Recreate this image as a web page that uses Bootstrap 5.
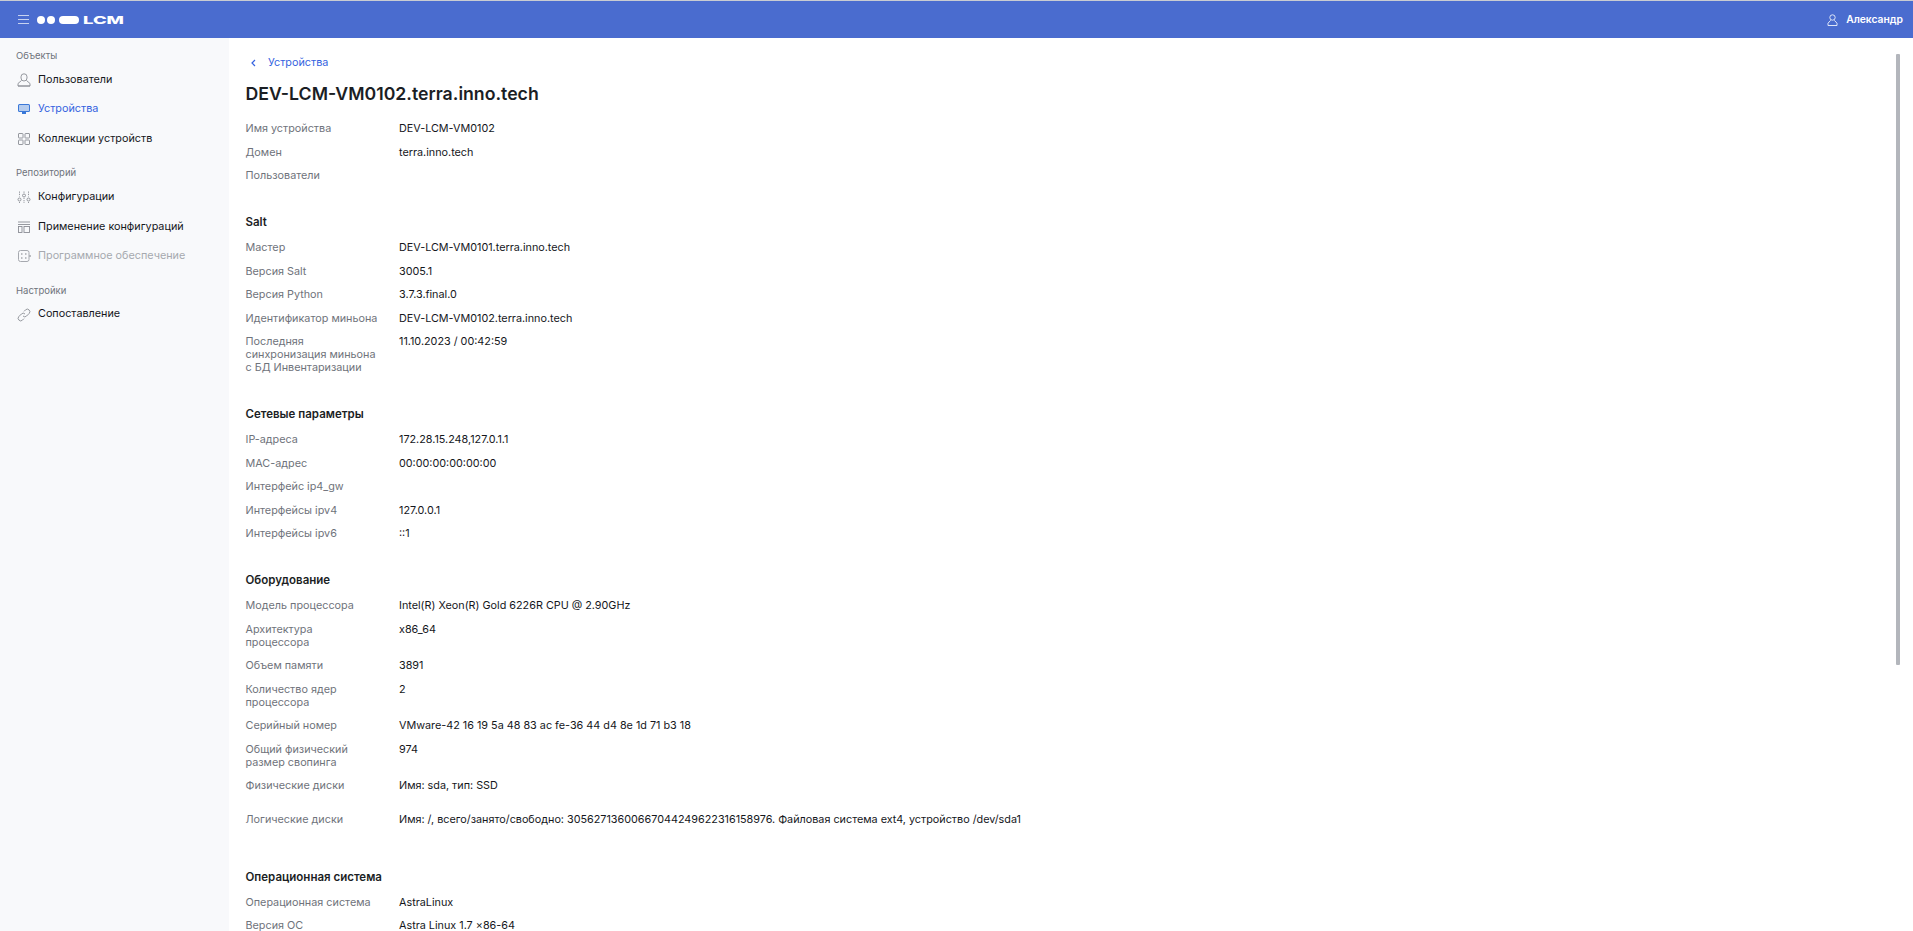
<!DOCTYPE html>
<html lang="ru"><head><meta charset="utf-8"><title>LCM</title>
<link href="https://cdn.jsdelivr.net/npm/bootstrap@5.3.0/dist/css/bootstrap.min.css" rel="stylesheet">
<style>
html,body{height:100%;overflow:hidden}
body{font-family:Inter,"Liberation Sans",sans-serif;font-size:10.8px;color:#15171c;background:#fff}
.topbar{height:38px;background:#4a6ccf;border-top:1px solid #c9ccd2;padding:0 10px 0 18px;flex:none}
.burger{width:11px;height:11px;display:block}
.brand-logo{margin-left:8px;display:block}
.user-name{font-weight:600;font-size:10.3px;color:#fff}
.shell{flex:1;min-height:0}
.sidebar{width:229px;background:#f8f9fb;padding-top:11px;flex:none}
.side-head{font-size:9.5px;line-height:14px;color:#6f737b;padding-left:16px;margin-bottom:2px}
.side-group{margin-bottom:12.6px}
.side-item{height:29.6px;padding-left:17px;gap:7px;color:#15171c;font-size:10.8px;text-decoration:none}
.side-item svg{width:14px;height:14px;flex:none;color:#8a8d94}
.side-item.is-on{color:#3563e0}
.side-item.is-on svg{color:#3a78d8}
.side-item.is-off{color:#a6a9af}
.side-item.is-off svg{color:#a6a9af}
.content{flex:1;min-width:0;padding:17px 0 0 16.5px;overflow:hidden;position:relative}
.crumb{color:#3563e0;text-decoration:none;font-size:10.8px;line-height:16px;gap:12px;padding-left:5.5px}
.page-title{font-size:17.7px;font-weight:600;line-height:24px;margin:10.3px 0 15.7px;color:#1b1e24}
.sect{margin-bottom:32.7px}
.sect-title{font-size:11.5px;font-weight:600;line-height:15px;margin:0 0 11px;color:#1b1e24}
.kv{margin-bottom:10.58px;line-height:13px}
.kv-key{width:153.5px;padding-right:20.5px;color:#6f737b;flex:none}
.kv-wide{margin-bottom:21px}
.kv-end{margin-bottom:43.3px}
.thumb{position:absolute;right:13px;top:16px;width:4px;height:611px;background:#b3b6bc;border-radius:1px}
</style></head>
<body class="d-flex flex-column">
<header class="topbar d-flex align-items-center justify-content-between">
  <div class="d-flex align-items-center">
    <svg class="burger" viewBox="0 0 11 11" fill="none" stroke="#c7d2f0" stroke-width="1"><path d="M0 1.5h11M0 5.5h11M0 9.5h11"/></svg>
    <svg class="brand-logo" width="90" height="12" viewBox="0 0 90 12"><circle cx="4" cy="6" r="4" fill="#fff"/><circle cx="14" cy="6" r="4" fill="#fff"/><rect x="22" y="2" width="20" height="8" rx="4" fill="#fff"/><text x="46" y="10" fill="#fff" font-family="Inter" font-weight="800" font-size="11" textLength="41" lengthAdjust="spacingAndGlyphs">LCM</text></svg>
  </div>
  <div class="d-flex align-items-center gap-2">
    <svg width="11" height="12" viewBox="0 0 11 12" fill="none" stroke="#dfe6f8" stroke-width="1"><circle cx="5.5" cy="3.5" r="2.7"/><path d="M3.7 6.3 1 9.2v2.3h9V9.2L7.3 6.3"/></svg>
    <span class="user-name">Александр</span>
  </div>
</header>
<div class="shell d-flex">
  <nav class="sidebar">
    <div class="side-group">
      <div class="side-head">Объекты</div>
      <a class="side-item d-flex align-items-center" href="#"><svg viewBox="0 0 14 14" fill="none" stroke="currentColor" stroke-width=".9"><rect x="4" y=".8" width="6" height="7.200" rx="3"/><path d="M4.500 7.500 1 10.500V13h12v-2.500L9.500 7.500"/><path d="M1 13h12"/></svg>Пользователи</a>
      <a class="side-item is-on d-flex align-items-center" href="#"><svg viewBox="0 0 14 14" fill="currentColor"><path d="M2.500 2h9A1.500 1.500 0 0 1 13 3.500v5A1.500 1.500 0 0 1 11.500 10h-9A1.500 1.500 0 0 1 1 8.500v-5A1.500 1.500 0 0 1 2.500 2zm0 1a.5.5 0 0 0-.5.5v5a.5.5 0 0 0 .5.5h9a.5.5 0 0 0 .5-.5v-5a.5.5 0 0 0-.5-.5z"/><path d="M2 3h10v6H2z" opacity=".35"/><path d="M5 10h4v2H5z"/></svg>Устройства</a>
      <a class="side-item d-flex align-items-center" href="#"><svg viewBox="0 0 14 14" fill="none" stroke="currentColor" stroke-width=".9"><rect x="1.500" y="1.500" width="4.500" height="4.500" rx=".5"/><rect x="8" y="1.500" width="4.500" height="4.500" rx=".5"/><rect x="1.500" y="8" width="4.500" height="4.500" rx=".5"/><rect x="8" y="8" width="4.500" height="4.500" rx=".5"/></svg>Коллекции устройств</a>
    </div>
    <div class="side-group">
      <div class="side-head">Репозиторий</div>
      <a class="side-item d-flex align-items-center" href="#"><svg viewBox="0 0 14 14" fill="none" stroke="currentColor" stroke-width=".9"><path d="M2.500 1.500v5M7 1.500v2M11.500 1.500v5M7 8v1" stroke-dasharray="1.300 .9"/><circle cx="2.500" cy="9.500" r="1.500"/><circle cx="7" cy="5.500" r="1.500"/><circle cx="11.500" cy="9.500" r="1.500"/><path d="M7 10v3M2.500 12v1M11.500 12v1" stroke-dasharray="1.300 .9"/></svg>Конфигурации</a>
      <a class="side-item d-flex align-items-center" href="#"><svg viewBox="0 0 14 14" fill="none" stroke="currentColor" stroke-width=".9"><path d="M1 2h12M1 4.500h12"/><rect x="1.500" y="6.500" width="3.500" height="6"/><rect x="7" y="6.500" width="5.500" height="6"/></svg>Применение конфигураций</a>
      <a class="side-item is-off d-flex align-items-center" href="#"><svg viewBox="0 0 14 14" fill="none" stroke="currentColor"><rect x="1.500" y="1.500" width="10.500" height="11" rx="2"/><path d="M4 5h1.500M8 5h1.500M4 9h1.500M8 9h1.500M12 7h2" stroke-width="1.300"/></svg>Программное обеспечение</a>
    </div>
    <div class="side-group">
      <div class="side-head">Настройки</div>
      <a class="side-item d-flex align-items-center" href="#"><svg viewBox="0 0 14 14" fill="none" stroke="currentColor" stroke-width=".9"><path d="M6 8a2.500 2.500 0 0 0 3.600 0l2.500-2.500a2.500 2.500 0 0 0-3.600-3.600L7 3.400"/><path d="M8 6a2.500 2.500 0 0 0-3.600 0L1.900 8.500a2.500 2.500 0 0 0 3.600 3.600L7 10.600"/></svg>Сопоставление</a>
    </div>
  </nav>
  <main class="content">
    <a class="crumb d-inline-flex align-items-center" href="#"><svg width="5" height="8" viewBox="0 0 5 8" fill="none" stroke="#3563e0" stroke-width="1.200"><path d="M4 1 1 4l3 3"/></svg>Устройства</a>
    <h1 class="page-title">DEV-LCM-VM0102.terra.inno.tech</h1>
    <section class="sect">
      <div class="kv d-flex"><div class="kv-key">Имя устройства</div><div>DEV-LCM-VM0102</div></div>
      <div class="kv d-flex"><div class="kv-key">Домен</div><div>terra.inno.tech</div></div>
      <div class="kv d-flex"><div class="kv-key">Пользователи</div><div></div></div>
    </section>
    <section class="sect">
      <h2 class="sect-title">Salt</h2>
      <div class="kv d-flex"><div class="kv-key">Мастер</div><div>DEV-LCM-VM0101.terra.inno.tech</div></div>
      <div class="kv d-flex"><div class="kv-key">Версия Salt</div><div>3005.1</div></div>
      <div class="kv d-flex"><div class="kv-key">Версия Python</div><div>3.7.3.final.0</div></div>
      <div class="kv d-flex"><div class="kv-key">Идентификатор миньона</div><div>DEV-LCM-VM0102.terra.inno.tech</div></div>
      <div class="kv d-flex"><div class="kv-key">Последняя синхронизация миньона с БД Инвентаризации</div><div>11.10.2023 / 00:42:59</div></div>
    </section>
    <section class="sect">
      <h2 class="sect-title">Сетевые параметры</h2>
      <div class="kv d-flex"><div class="kv-key">IP-адреса</div><div>172.28.15.248,127.0.1.1</div></div>
      <div class="kv d-flex"><div class="kv-key">MAC-адрес</div><div>00:00:00:00:00:00</div></div>
      <div class="kv d-flex"><div class="kv-key">Интерфейс ip4_gw</div><div></div></div>
      <div class="kv d-flex"><div class="kv-key">Интерфейсы ipv4</div><div>127.0.0.1</div></div>
      <div class="kv d-flex"><div class="kv-key">Интерфейсы ipv6</div><div>::1</div></div>
    </section>
    <section class="sect">
      <h2 class="sect-title">Оборудование</h2>
      <div class="kv d-flex"><div class="kv-key">Модель процессора</div><div>Intel(R) Xeon(R) Gold 6226R CPU @ 2.90GHz</div></div>
      <div class="kv d-flex"><div class="kv-key">Архитектура процессора</div><div>x86_64</div></div>
      <div class="kv d-flex"><div class="kv-key">Объем памяти</div><div>3891</div></div>
      <div class="kv d-flex"><div class="kv-key">Количество ядер процессора</div><div>2</div></div>
      <div class="kv d-flex"><div class="kv-key">Серийный номер</div><div>VMware-42 16 19 5a 48 83 ac fe-36 44 d4 8e 1d 71 b3 18</div></div>
      <div class="kv d-flex"><div class="kv-key">Общий физический размер свопинга</div><div>974</div></div>
      <div class="kv kv-wide d-flex"><div class="kv-key">Физические диски</div><div>Имя: sda, тип: SSD</div></div>
      <div class="kv kv-end d-flex"><div class="kv-key">Логические диски</div><div>Имя: /, всего/занято/свободно: 30562713600667044249622316158976. Файловая система ext4, устройство /dev/sda1</div></div>
    </section>
    <section class="sect">
      <h2 class="sect-title">Операционная система</h2>
      <div class="kv d-flex"><div class="kv-key">Операционная система</div><div>AstraLinux</div></div>
      <div class="kv d-flex"><div class="kv-key">Версия ОС</div><div>Astra Linux 1.7 x86-64</div></div>
    </section>
    <div class="thumb"></div>
  </main>
</div>
<script src="https://cdn.jsdelivr.net/npm/bootstrap@5.3.0/dist/js/bootstrap.bundle.min.js"></script>
</body></html>
